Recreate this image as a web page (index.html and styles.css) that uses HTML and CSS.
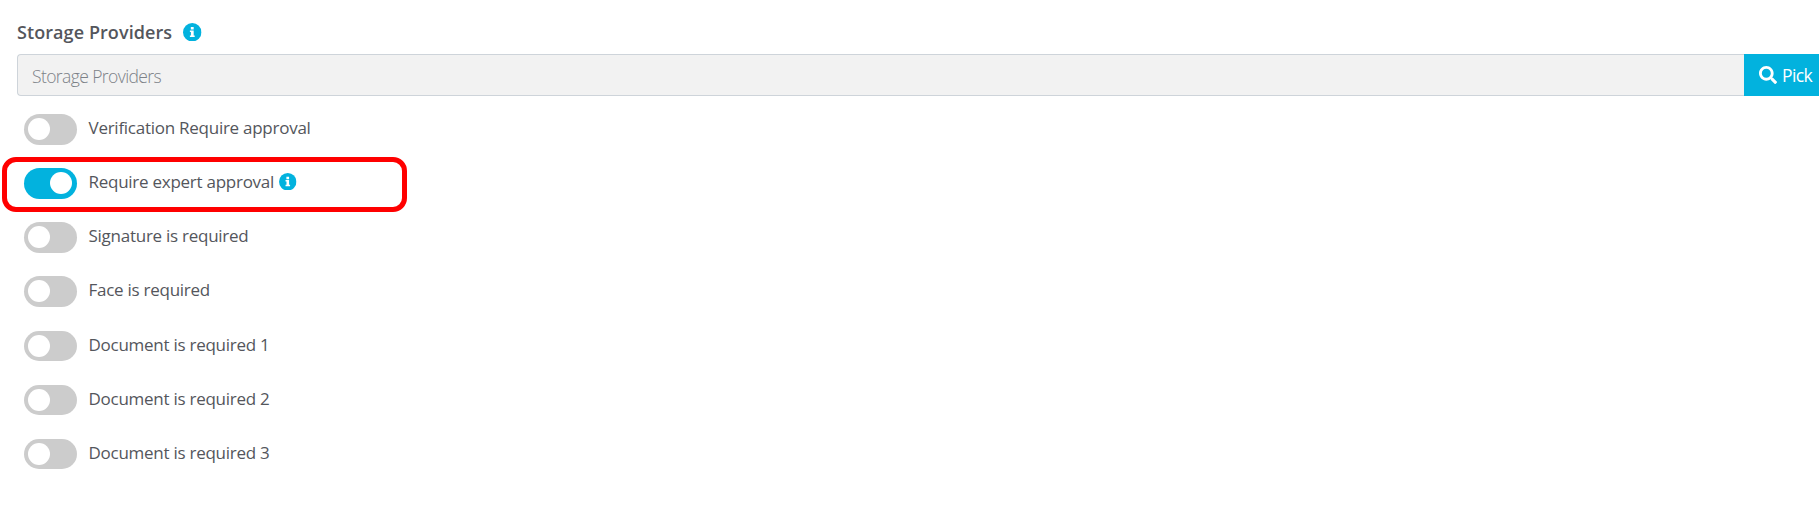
FILE: index.html
```html
<!DOCTYPE html>
<html lang="en">
<head>
  <meta charset="UTF-8">
  <meta name="viewport" content="width=device-width, initial-scale=1.0">
  <title>Storage Providers</title>
  <link rel="stylesheet" href="styles.css">
</head>
<body>

  <svg class="sprite" width="0" height="0">
    <symbol id="info" viewBox="0 0 18 18">
      <circle cx="9" cy="9" r="9" fill="#02b2de"/>
      <path fill="#fff" d="M7.6 3.9h2.8v2.5H7.6zM6.7 7.3h3.7v4.9h1v1.5H6.7v-1.5h1V8.8h-1z"/>
    </symbol>
  </svg>

  <div class="form-group">
    <label class="form-label" for="storage"><span>Storage Providers</span>
      <svg class="info-icon"><use href="#info"/></svg>
    </label>
    <div class="input-group">
      <input class="form-control" id="storage" type="text" placeholder="Storage Providers" readonly>
      <button class="pick-button" type="button">
        <svg class="search-icon" viewBox="0 0 512 512"><path fill="currentColor" d="M505 442.700L405.300 343c-4.500-4.500-10.600-7-17-7H372c27.600-35.300 44-79.700 44-128C416 93.100 322.900 0 208 0S0 93.100 0 208s93.100 208 208 208c48.300 0 92.700-16.400 128-44v16.300c0 6.400 2.500 12.500 7 17l99.700 99.700c9.400 9.400 24.600 9.400 33.900 0l28.300-28.300c9.400-9.400 9.400-24.600.1-34zM208 336c-70.700 0-128-57.200-128-128 0-70.700 57.200-128 128-128 70.700 0 128 57.200 128 128 0 70.700-57.200 128-128 128z"/></svg>
        <span>Pick</span>
      </button>
    </div>
  </div>

  <div class="switches">
    <label class="switch-row">
      <input type="checkbox"><span class="slider"></span>
      <span class="switch-text">Verification Require approval</span>
    </label>
    <label class="switch-row highlight">
      <input type="checkbox" checked><span class="slider"></span>
      <span class="switch-text">Require expert approval</span>
      <svg class="info-icon"><use href="#info"/></svg>
    </label>
    <label class="switch-row">
      <input type="checkbox"><span class="slider"></span>
      <span class="switch-text">Signature is required</span>
    </label>
    <label class="switch-row">
      <input type="checkbox"><span class="slider"></span>
      <span class="switch-text">Face is required</span>
    </label>
    <label class="switch-row">
      <input type="checkbox"><span class="slider"></span>
      <span class="switch-text">Document is required 1</span>
    </label>
    <label class="switch-row">
      <input type="checkbox"><span class="slider"></span>
      <span class="switch-text">Document is required 2</span>
    </label>
    <label class="switch-row">
      <input type="checkbox"><span class="slider"></span>
      <span class="switch-text">Document is required 3</span>
    </label>
  </div>

</body>
</html>
```
FILE: styles.css
```css
* {
  box-sizing: border-box;
}

body {
  font-family: "Segoe UI", "Open Sans", "Noto Sans", sans-serif;
  font-size: 17px;
  margin: 0;
  padding: 19px 1px 0 17px;
  background-color: #fff;
  color: #54565c;
  overflow: hidden;
}

.sprite {
  display: block;
}

.form-label {
  display: flex;
  align-items: center;
  height: 26px;
  margin-bottom: 9px;
  font-size: 18px;
  font-weight: 600;
  letter-spacing: 0.08px;
}

.form-label .info-icon {
  width: 18.5px;
  height: 18.5px;
  margin-left: 11px;
}

.info-icon {
  width: 17.5px;
  height: 17.5px;
  flex: none;
}

.input-group {
  display: flex;
  height: 42px;
}

.form-control {
  flex: 1;
  min-width: 0;
  padding: 2px 14px 0;
  font: inherit;
  font-size: 17.5px;
  font-weight: 300;
  letter-spacing: -0.6px;
  background-color: #f2f2f2;
  border: 1px solid #ced4da;
  border-right: none;
  border-radius: 4px 0 0 4px;
  outline: none;
}

.form-control::placeholder {
  color: #7c8187;
  opacity: 1;
}

.pick-button {
  display: flex;
  align-items: center;
  gap: 5px;
  width: 75px;
  padding: 0 0 0 15px;
  font: inherit;
  font-size: 17.5px;
  letter-spacing: -0.6px;
  color: #fff;
  background-color: #02b2de;
  border: none;
  cursor: pointer;
}

.search-icon {
  width: 18px;
  height: 18px;
  flex: none;
}

.switches {
  padding: 18px 0 0 7px;
}

.switch-row {
  position: relative;
  display: flex;
  align-items: flex-start;
  height: 54.17px;
  cursor: pointer;
}

.switch-row input {
  display: none;
}

.slider {
  width: 53px;
  height: 30.5px;
  padding: 4px 5px 4px 4px;
  border-radius: 16px;
  background-color: #ccc;
}

.slider::before {
  content: "";
  display: block;
  width: 22px;
  height: 22px;
  border-radius: 50%;
  background-color: #fff;
}

input:checked + .slider {
  background-color: #02b2de;
}

input:checked + .slider::before {
  margin-left: auto;
}

.switch-text {
  margin-left: 11.5px;
  font-size: 17px;
  line-height: 28px;
  letter-spacing: -0.26px;
}

.switch-row .info-icon {
  margin: 4.5px 0 0 5px;
}

/* red frame around the active option */
.highlight::after {
  content: "";
  position: absolute;
  box-sizing: border-box;
  top: -11px;
  left: -22px;
  width: 405px;
  height: 55px;
  border: 5px solid #f00;
  border-radius: 14px;
}
```
